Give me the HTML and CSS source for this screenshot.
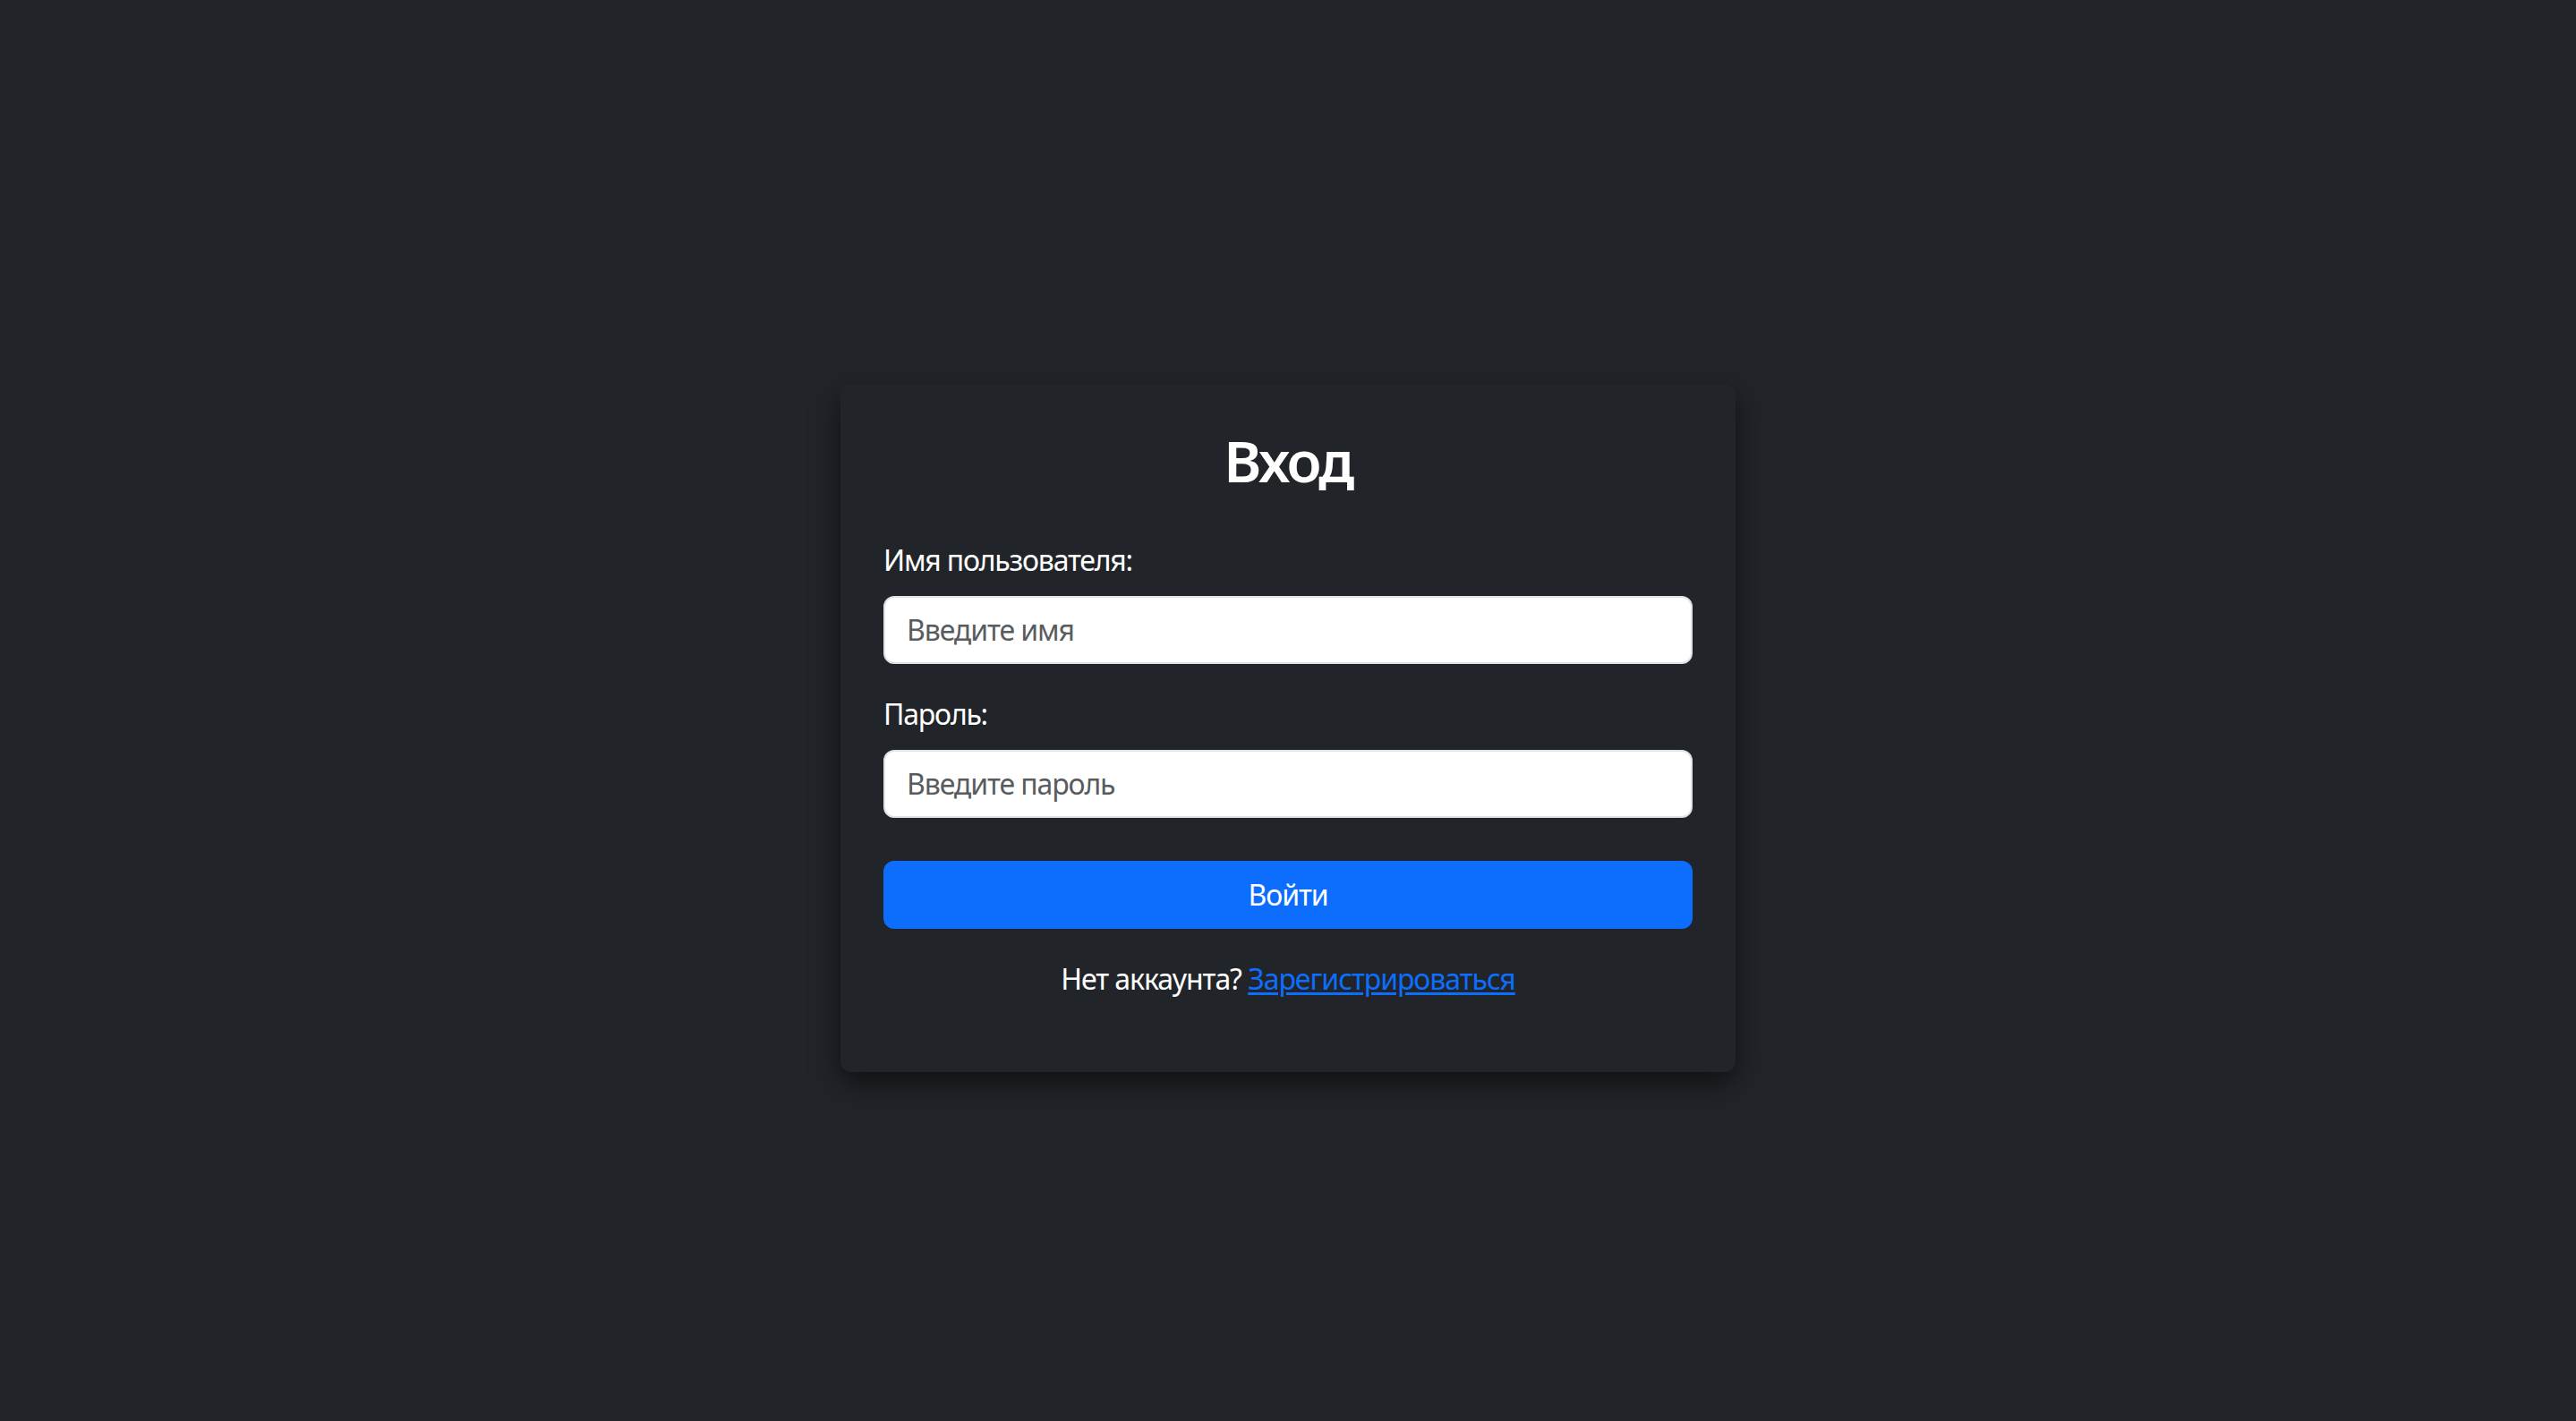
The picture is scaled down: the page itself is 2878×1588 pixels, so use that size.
FILE: index.html
```html
<!DOCTYPE html>
<html lang="ru">
<head>
<meta charset="utf-8">
<title>Вход</title>
<link rel="stylesheet" href="styles.css">
</head>
<body>
<main class="page">
  <section class="card">
    <h2 class="title">Вход</h2>
    <form class="form">
      <div class="group">
        <label class="label" for="username">Имя пользователя:</label>
        <input class="input" id="username" type="text" placeholder="Введите имя">
      </div>
      <div class="group group-last">
        <label class="label" for="password">Пароль:</label>
        <input class="input" id="password" type="password" placeholder="Введите пароль">
      </div>
      <button class="btn" type="button">Войти</button>
    </form>
    <p class="footer">Нет аккаунта? <a class="link" href="#">Зарегистрироваться</a></p>
  </section>
</main>
</body>
</html>
```

FILE: styles.css
```css
* { box-sizing: border-box; }
html, body {
  margin: 0;
  padding: 0;
  background: #212529;
  color: #fff;
  font-family: "Noto Sans", "Open Sans", sans-serif;
  font-size: 32px;
  line-height: 1.5;
}
.page {
  min-height: 100vh;
  display: flex;
  justify-content: center;
  align-items: flex-start;
  padding-top: 429px;
}
.card {
  width: 1000px;
  background: #212529;
  border-radius: 12px;
  padding: 48px;
  box-shadow: 0 12px 32px rgba(0, 0, 0, 0.55);
}
.title {
  margin: 0 0 48px;
  font-size: 64px;
  font-weight: 600;
  line-height: 1.2;
  text-align: center;
  letter-spacing: -2.6px;
}
.form { display: flex; flex-direction: column; }
.group { display: flex; flex-direction: column; margin-bottom: 32px; }
.group-last { margin-bottom: 48px; }
.label {
  display: block;
  margin-bottom: 16px;
  font-size: 32px;
  line-height: 48px;
  letter-spacing: -1.2px;
}
.input {
  display: block;
  width: 100%;
  height: 76px;
  padding: 12px 24px;
  font-family: inherit;
  font-size: 32px;
  line-height: 48px;
  color: #212529;
  background: #fff;
  border: 2px solid #dee2e6;
  border-radius: 12px;
  outline: none;
  letter-spacing: -1.1px;
}
.input::placeholder { color: #595c5f; opacity: 1; }
.btn {
  display: block;
  width: 100%;
  height: 76px;
  padding: 12px 24px;
  font-family: inherit;
  font-size: 32px;
  line-height: 48px;
  color: #fff;
  background: #0d6efd;
  border: 2px solid #0d6efd;
  border-radius: 12px;
  cursor: pointer;
  letter-spacing: -1.1px;
}
.footer {
  margin: 32px 0 32px;
  text-align: center;
  font-size: 32px;
  line-height: 48px;
  letter-spacing: -1.05px;
}
.link { color: #0d6efd; text-decoration: underline; text-underline-offset: 3px; }
```
